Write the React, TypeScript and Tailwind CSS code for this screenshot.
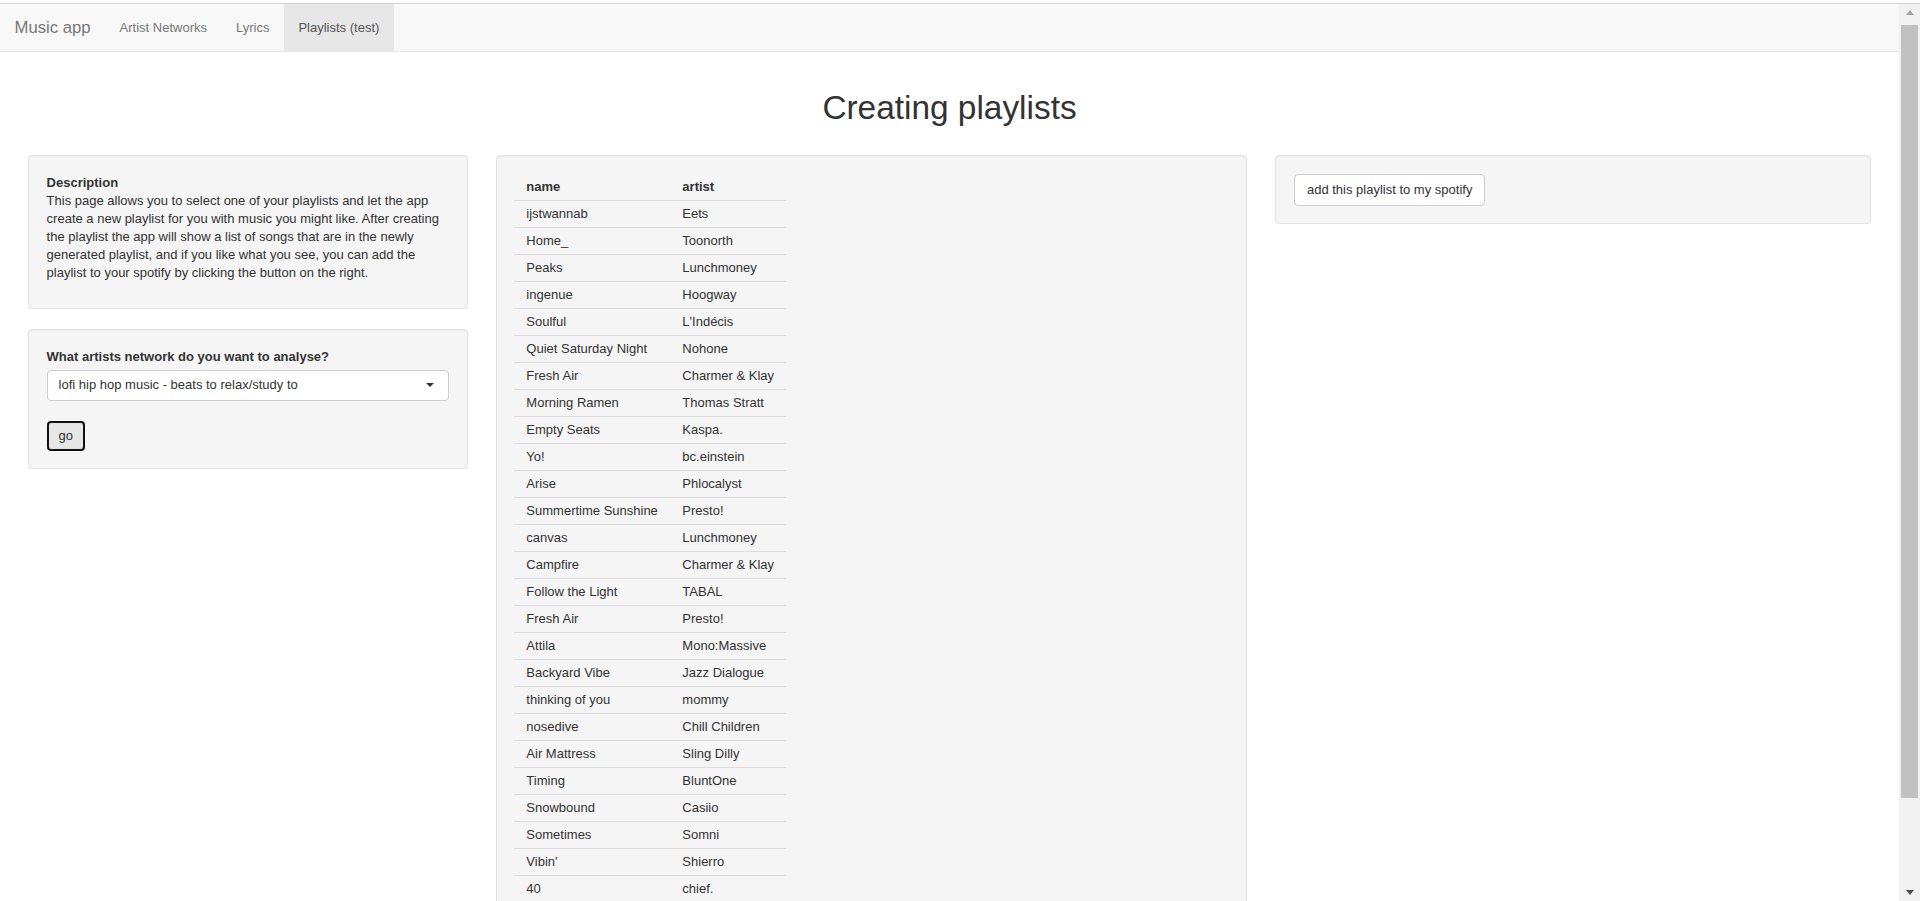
import React from "react";

const rows: [string, string][] = [
  ["ijstwannab", "Eets"],
  ["Home_", "Toonorth"],
  ["Peaks", "Lunchmoney"],
  ["ingenue", "Hoogway"],
  ["Soulful", "L'Indécis"],
  ["Quiet Saturday Night", "Nohone"],
  ["Fresh Air", "Charmer & Klay"],
  ["Morning Ramen", "Thomas Stratt"],
  ["Empty Seats", "Kaspa."],
  ["Yo!", "bc.einstein"],
  ["Arise", "Phlocalyst"],
  ["Summertime Sunshine", "Presto!"],
  ["canvas", "Lunchmoney"],
  ["Campfire", "Charmer & Klay"],
  ["Follow the Light", "TABAL"],
  ["Fresh Air", "Presto!"],
  ["Attila", "Mono:Massive"],
  ["Backyard Vibe", "Jazz Dialogue"],
  ["thinking of you", "mommy"],
  ["nosedive", "Chill Children"],
  ["Air Mattress", "Sling Dilly"],
  ["Timing", "BluntOne"],
  ["Snowbound", "Casiio"],
  ["Sometimes", "Somni"],
  ["Vibin'", "Shierro"],
  ["40", "chief."],
];

const well =
  "bg-[#f5f5f5] border border-[#e3e3e3] rounded-[4px] p-[17.6px] shadow-[inset_0_1px_1px_rgba(0,0,0,0.05)]";

export default function App() {
  return (
    <div className="h-[901px] w-[1920px] overflow-hidden flex flex-col bg-white font-['Liberation_Sans',Arial,sans-serif] text-[13px] leading-[18px] text-[#333]">
      <div className="h-[3px] shrink-0 bg-white" />
      <div className="h-[1px] shrink-0 bg-[#d4d4d4]" />
      <div className="flex flex-1 min-h-0">
        {/* main page */}
        <div className="flex-1 min-w-0 overflow-hidden">
          {/* navbar */}
          <nav className="h-[48px] bg-[#f8f8f8] border-b border-[#e7e7e7] flex items-stretch">
            <div className="px-[14.5px] flex items-center text-[16.7px] text-[#777]">Music app</div>
            <div className="px-[14.5px] flex items-center text-[#777]">Artist Networks</div>
            <div className="px-[14.5px] flex items-center text-[#777]">Lyrics</div>
            <div className="px-[14.5px] flex items-center text-[#555] bg-[#e7e7e7]">Playlists (test)</div>
          </nav>

          <div className="px-[14px]">
            <h1 className="mt-[37px] h-[37px] leading-[37px] text-[33.4px] text-center text-[#333] font-normal">
              Creating playlists
            </h1>

            <div className="mt-[29px] grid grid-cols-[3fr_5fr_4fr] items-start">
              {/* left column */}
              <div className="px-[14px] flex flex-col gap-[20px]">
                <div className={well}>
                  <p className="mb-[9px]">
                    <b>Description</b>
                    <br />
                    This page allows you to select one of your playlists and let the app
                    <br />
                    create a new playlist for you with music you might like. After creating
                    <br />
                    the playlist the app will show a list of songs that are in the newly
                    <br />
                    generated playlist, and if you like what you see, you can add the
                    <br />
                    playlist to your spotify by clicking the button on the right.
                  </p>
                </div>
                <div className={well}>
                  <div className="font-bold mb-[4px]">What artists network do you want to analyse?</div>
                  <div className="h-[31px] w-full bg-white border border-[#ccc] rounded-[4px] flex items-center pl-[11px] pr-[14px]">
                    <span className="flex-1">lofi hip hop music - beats to relax/study to</span>
                    <span className="w-0 h-0 border-l-[4.6px] border-r-[4.6px] border-t-[4.6px] border-l-transparent border-r-transparent border-t-[#333]" />
                  </div>
                  <button className="mt-[20px] h-[30px] px-[10px] border-2 border-[#111] rounded-[4px] bg-[#e6e6e6] text-[#333] leading-[18px]">
                    go
                  </button>
                </div>
              </div>

              {/* middle column */}
              <div className="px-[14px]">
                <div className={well}>
                  <div className="w-[272px]">
                    <div className="grid grid-cols-[156px_116px] h-[26px] items-center font-bold">
                      <div className="px-[12px]">name</div>
                      <div className="px-[12px]">artist</div>
                    </div>
                    {rows.map(([n, a], i) => (
                      <div
                        key={i}
                        className="grid grid-cols-[156px_116px] h-[27px] items-center border-t border-[#ddd] whitespace-nowrap"
                      >
                        <div className="px-[12px]">{n}</div>
                        <div className="px-[12px]">{a}</div>
                      </div>
                    ))}
                  </div>
                </div>
              </div>

              {/* right column */}
              <div className="px-[14px]">
                <div className={well}>
                  <button className="h-[32px] px-[12px] border border-[#ccc] rounded-[4px] bg-white text-[#333] leading-[18px]">
                    add this playlist to my spotify
                  </button>
                </div>
              </div>
            </div>
          </div>
        </div>

        {/* scrollbar */}
        <div className="w-[21px] shrink-0 bg-[#f1f1f1] flex flex-col">
          <div className="h-[17px] flex items-center justify-center">
            <span className="w-0 h-0 border-l-[4.5px] border-r-[4.5px] border-b-[5px] border-l-transparent border-r-transparent border-b-[#a3a3a3]" />
          </div>
          <div className="flex-1 pt-[4px] px-[2px]">
            <div className="h-[773px] bg-[#c1c1c1]" />
          </div>
          <div className="h-[17px] flex items-center justify-center">
            <span className="w-0 h-0 border-l-[4.5px] border-r-[4.5px] border-t-[5px] border-l-transparent border-r-transparent border-t-[#505050]" />
          </div>
        </div>
      </div>
    </div>
  );
}
